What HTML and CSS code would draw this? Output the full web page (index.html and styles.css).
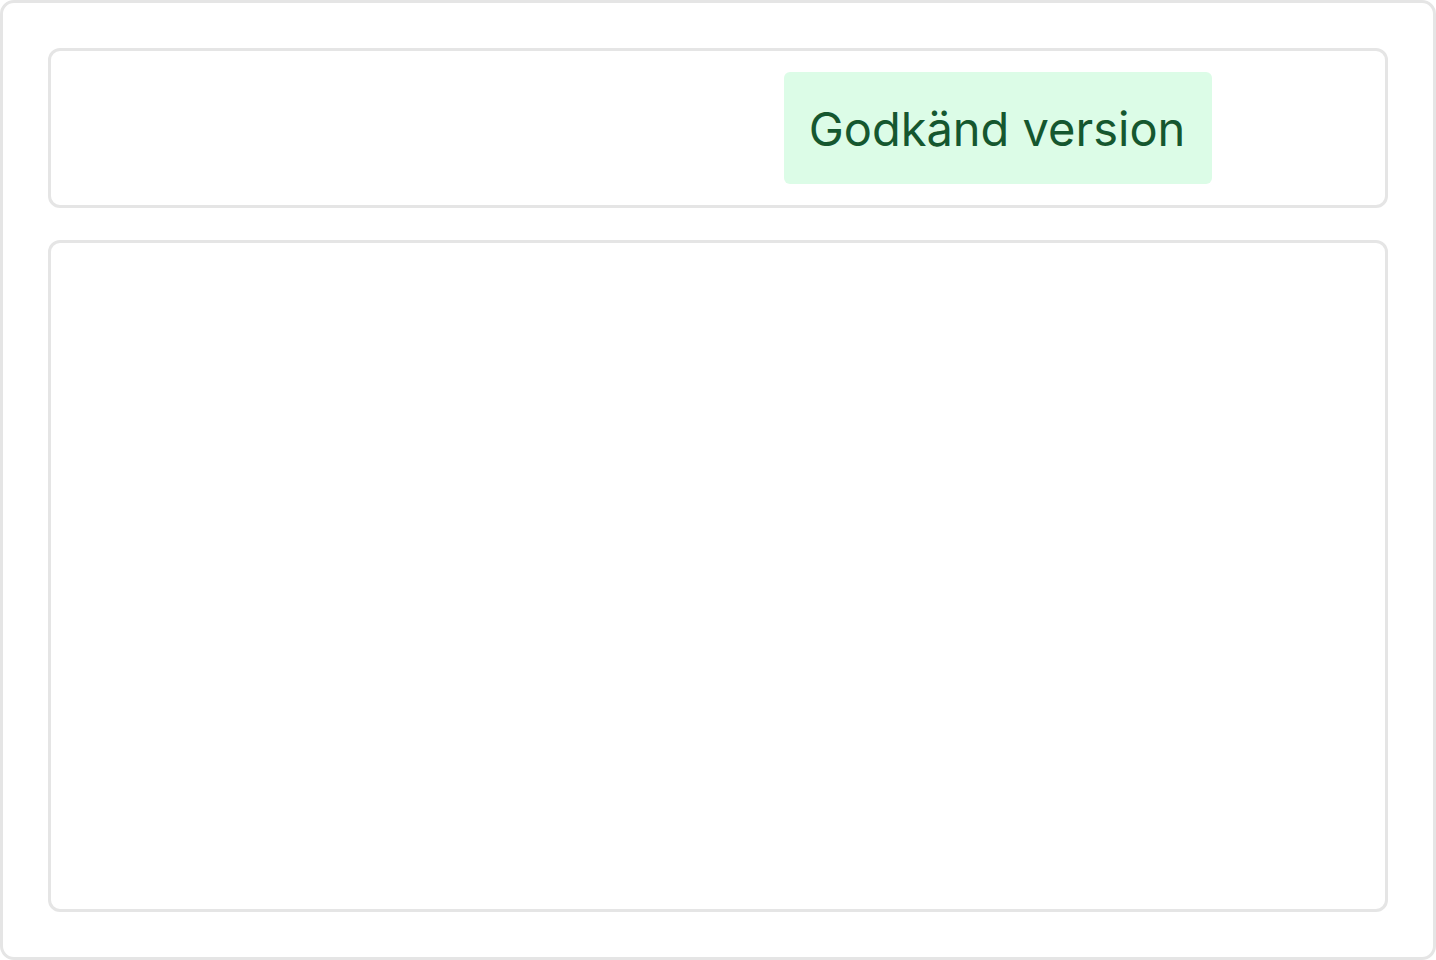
FILE: index.html
```html
<!DOCTYPE html>
<html lang="sv">
<head>
<meta charset="utf-8">
<title>Godkänd version</title>
<link rel="stylesheet" href="styles.css">
</head>
<body>
<div class="frame">
  <div class="card header-card">
    <span class="badge">Godkänd version</span>
  </div>
  <div class="card body-card"></div>
</div>
</body>
</html>
```

FILE: styles.css
```css
html, body {
  margin: 0;
  padding: 0;
  background: #ffffff;
}
body {
  font-family: Inter, "Noto Sans", "Liberation Sans", sans-serif;
}
.frame {
  box-sizing: border-box;
  width: 1436px;
  height: 960px;
  border: 3px solid #e5e5e5;
  border-radius: 14px;
  padding: 45px;
  display: flex;
  flex-direction: column;
  gap: 32px;
}
.card {
  box-sizing: border-box;
  border: 3px solid #e5e5e5;
  border-radius: 12px;
  background: #fff;
}
.header-card {
  height: 160px;
  display: flex;
  align-items: center;
  justify-content: flex-end;
  padding: 0 173px 0 21px;
}
.body-card {
  flex: 1;
}
.badge {
  box-sizing: border-box;
  height: 112px;
  width: 428px;
  display: flex;
  align-items: center;
  justify-content: center;
  padding-right: 2px;
  background: #dcfce7;
  color: #15572f;
  border-radius: 6px;
  font-size: 47px;
  line-height: 1;
}
```
